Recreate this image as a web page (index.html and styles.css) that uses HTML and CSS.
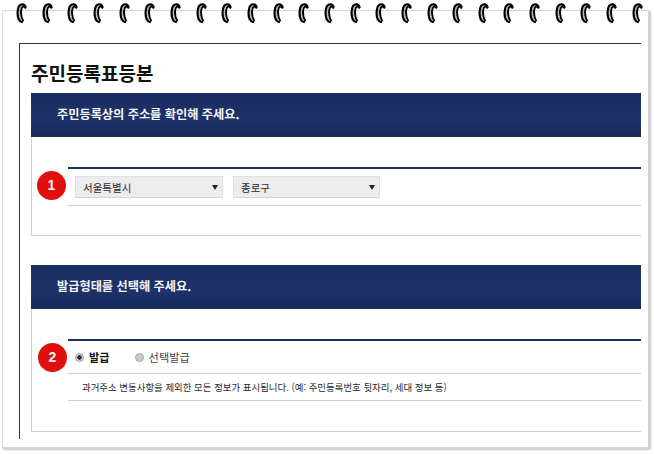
FILE: index.html
```html
<!DOCTYPE html>
<html lang="ko">
<head>
<meta charset="utf-8">
<title>주민등록표등본</title>
<link rel="stylesheet" href="styles.css">
</head>
<body>
<svg class="defs" width="0" height="0" aria-hidden="true">
  <symbol id="ring" viewBox="0 0 12 22">
    <path d="M7 20C4 19 2.5 15 2.6 10.500C2.700 6 4.300 2.300 7.500 2.300C9 2.300 10 3.200 10.500 5" fill="none" stroke="#000" stroke-width="2.300" stroke-linecap="round"/>
    <path d="M8 18.500C6.500 16 6 13 6 10.500C6 7.500 6.600 5.200 8.200 4.600C9 4.400 9.800 4.800 10.300 5.800" fill="none" stroke="#000" stroke-width="2" stroke-linecap="round"/>
    <path d="M6.700 19C5 16.500 4.300 13.500 4.300 10.500C4.300 7.500 5 4.800 7 3.700" fill="none" stroke="#a8a8a8" stroke-width="1"/>
  </symbol>
</svg>
<div class="sheet">
  <div class="rings">
    <svg class="ring"><use href="#ring"/></svg><svg class="ring"><use href="#ring"/></svg><svg class="ring"><use href="#ring"/></svg><svg class="ring"><use href="#ring"/></svg><svg class="ring"><use href="#ring"/></svg>
    <svg class="ring"><use href="#ring"/></svg><svg class="ring"><use href="#ring"/></svg><svg class="ring"><use href="#ring"/></svg><svg class="ring"><use href="#ring"/></svg><svg class="ring"><use href="#ring"/></svg>
    <svg class="ring"><use href="#ring"/></svg><svg class="ring"><use href="#ring"/></svg><svg class="ring"><use href="#ring"/></svg><svg class="ring"><use href="#ring"/></svg><svg class="ring"><use href="#ring"/></svg>
    <svg class="ring"><use href="#ring"/></svg><svg class="ring"><use href="#ring"/></svg><svg class="ring"><use href="#ring"/></svg><svg class="ring"><use href="#ring"/></svg><svg class="ring"><use href="#ring"/></svg>
    <svg class="ring"><use href="#ring"/></svg><svg class="ring"><use href="#ring"/></svg><svg class="ring"><use href="#ring"/></svg><svg class="ring"><use href="#ring"/></svg><svg class="ring"><use href="#ring"/></svg>
  </div>
  <main class="frame">
    <h1 class="title">주민등록표등본</h1>
    <section class="section">
      <h2 class="band">주민등록상의 주소를 확인해 주세요.</h2>
      <div class="panel panel-address">
        <div class="rows">
          <span class="badge">1</span>
          <div class="row row-selects">
            <div class="select select-city"><span>서울특별시</span><i class="arrow"></i></div>
            <div class="select select-gu"><span>종로구</span><i class="arrow"></i></div>
          </div>
        </div>
      </div>
    </section>
    <section class="section section-second">
      <h2 class="band">발급형태를 선택해 주세요.</h2>
      <div class="panel panel-type">
        <div class="rows">
          <span class="badge">2</span>
          <div class="row row-radios">
            <span class="radio radio-on"><i class="dot"></i><b>발급</b></span>
            <span class="radio"><i class="dot"></i>선택발급</span>
          </div>
          <div class="row row-note">과거주소 변동사항을 제외한 모든 정보가 표시됩니다. (예: 주민등록번호 뒷자리, 세대 정보 등)</div>
        </div>
      </div>
    </section>
  </main>
</div>
</body>
</html>
```
FILE: styles.css
```css
* { box-sizing: border-box; }
html, body { margin: 0; padding: 0; }
body {
  width: 654px;
  height: 454px;
  overflow: hidden;
  background: #fff;
  font-family: "Noto Sans CJK KR", "Liberation Sans", sans-serif;
  color: #222;
}
.defs { display: block; height: 0; }
.sheet {
  position: relative;
  width: 649px;
  height: 440px;
  margin: 10px 0 0 2px;
  padding: 32px 0 0 16px;
  background: #fff;
  border-top: 1px solid #d6d6d6;
  border-left: 1px solid #d6d6d6;
  border-right: 3px solid #d4d4d4;
  border-bottom: 3px solid #d4d4d4;
  border-radius: 3px;
  box-shadow: 1px 1px 1px #eee;
}
.rings {
  position: absolute;
  left: 12px;
  top: -9px;
  display: flex;
  gap: 13.67px;
}
.ring { width: 12px; height: 22px; flex: none; }
.frame {
  width: 622px;
  height: 396px;
  padding: 15px 0 0 11px;
  border-top: 1px solid #333;
  border-left: 1px solid #333;
}
.title {
  margin: 0 0 9px 0;
  height: 25px;
  font-size: 19px;
  line-height: 27px;
  font-weight: 700;
  color: #111;
  white-space: nowrap;
}
.section-second { margin-top: 29px; }
.band {
  margin: 0;
  height: 44px;
  padding-left: 26px;
  font-size: 12.2px;
  line-height: 42px;
  font-weight: 700;
  color: #f4f5f8;
  background: linear-gradient(180deg, #1a2d62 0%, #1d3269 60%, #192b5c 100%);
}
.panel {
  border-left: 1px solid #d2d2d2;
  border-bottom: 1px solid #cfcfcf;
}
.panel-address { height: 99px; padding: 30px 0 0 36px; }
.panel-type { height: 123px; padding: 30px 0 0 36px; }
.rows {
  position: relative;
  border-top: 2px solid #1c2f5f;
}
.badge {
  position: absolute;
  left: -31px;
  top: 2px;
  width: 29px;
  height: 29px;
  border-radius: 50%;
  background: #e20f0f;
  color: #f6f6f6;
  font: 700 14px/29px "Liberation Sans", sans-serif;
  text-align: center;
}
.panel-type .badge { left: -30px; }
.row { border-bottom: 1px solid #cfcfcf; }
.row-selects {
  display: flex;
  gap: 10px;
  height: 37px;
  padding: 7px 0 0 7px;
}
.select {
  display: flex;
  align-items: center;
  justify-content: space-between;
  height: 22px;
  padding: 0 4px 0 7px;
  background: #ececec;
  border: 1px solid #e0e0e0;
  border-bottom-color: #d4d4d4;
  font-size: 10.500px;
  color: #2a2a2a;
}
.select-city { width: 148px; }
.select-gu { width: 147px; }
.arrow {
  width: 0;
  height: 0;
  border-left: 3px solid transparent;
  border-right: 3px solid transparent;
  border-top: 5px solid #222;
}
.row-radios {
  display: flex;
  align-items: center;
  gap: 25px;
  height: 33px;
  padding-left: 7px;
  font-size: 11.200px;
  color: #444;
}
.radio { display: flex; align-items: center; gap: 5px; }
.radio b { color: #111; }
.dot {
  width: 9px;
  height: 9px;
  border-radius: 50%;
  background: #c8c8c8;
  border: 1px solid #aaa;
}
.radio-on .dot {
  background: radial-gradient(circle, #333 0 2px, #ddd 2.5px);
  border-color: #999;
}
.row-note {
  height: 27px;
  padding-left: 14px;
  font-size: 9.450px;
  line-height: 26px;
  color: #2a2a2a;
  white-space: nowrap;
}
```
